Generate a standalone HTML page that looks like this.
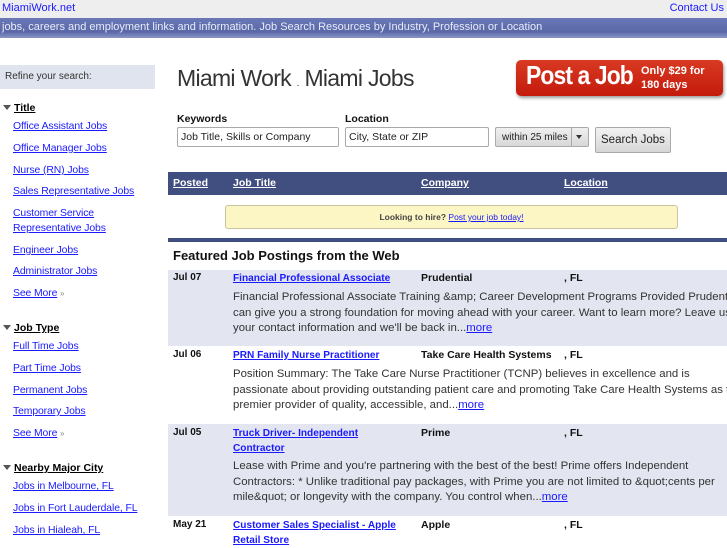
<!DOCTYPE html>
<html><head><style>
*{margin:0;padding:0;box-sizing:border-box}
body{width:727px;height:545px;overflow:hidden;background:#fff;font-family:"Liberation Sans",sans-serif;position:relative;color:#222}
.a{position:absolute;white-space:nowrap}
a{color:#1a1aff;text-decoration:underline}
.sl{font-size:10.4px;letter-spacing:-0.1px}
.sh{font-size:10.5px;font-weight:bold;color:#000}
.tri{display:inline-block;width:0;height:0;border-left:4px solid transparent;border-right:4px solid transparent;border-top:5px solid #555;margin-right:3px;vertical-align:1px}
.th a{color:#fff;font-weight:bold;font-size:10.5px}
.d{font-size:10px;font-weight:bold;color:#111}
.t{font-size:10.1px;font-weight:bold;line-height:15px}
.c{font-size:10.5px;font-weight:bold;color:#111}
.desc{font-size:11.4px;line-height:15.5px;color:#333}
.row{position:absolute;left:168px;width:559px}
.inp{position:absolute;border:1px solid #aaa;border-radius:2px;background:#fff;font-size:10.5px;padding:3px 3px;height:20px}
</style></head><body>
<div class="a" style="left:0;top:0;width:727px;height:18px;background:#eeeeee"></div>
<a class="a" style="left:2px;top:2px;font-size:11px;text-decoration:none">MiamiWork.net</a>
<a class="a" style="right:3px;top:2px;font-size:11px;text-decoration:none">Contact Us</a>
<div class="a" style="left:0;top:18px;width:727px;height:20px;background:linear-gradient(#6a78b8,#5a68a8 70%,#8a96c8)"></div>
<div class="a" style="left:2px;top:21px;font-size:11px;color:#e8ecf8">jobs, careers and employment links and information. Job Search Resources by Industry, Profession or Location</div>

<div class="a" style="left:0;top:65px;width:155px;height:24px;background:#e0e4ee"></div>
<div class="a" style="left:5px;top:71px;font-size:10px;color:#333">Refine your search:</div>

<div class="a sh" style="left:3px;top:102px"><span class="tri"></span><u>Title</u></div>
<a class="a sl" style="left:13px;top:121px">Office Assistant Jobs</a>
<a class="a sl" style="left:13px;top:143px">Office Manager Jobs</a>
<a class="a sl" style="left:13px;top:165px">Nurse (RN) Jobs</a>
<a class="a sl" style="left:13px;top:186px">Sales Representative Jobs</a>
<a class="a sl" style="left:13px;top:208px">Customer Service</a>
<a class="a sl" style="left:13px;top:223px">Representative Jobs</a>
<a class="a sl" style="left:13px;top:245px">Engineer Jobs</a>
<a class="a sl" style="left:13px;top:266px">Administrator Jobs</a>
<div class="a sl" style="left:13px;top:288px"><a>See More</a> <span style="color:#888;font-size:8px">»</span></div>

<div class="a sh" style="left:3px;top:322px"><span class="tri"></span><u>Job Type</u></div>
<a class="a sl" style="left:13px;top:341px">Full Time Jobs</a>
<a class="a sl" style="left:13px;top:363px">Part Time Jobs</a>
<a class="a sl" style="left:13px;top:385px">Permanent Jobs</a>
<a class="a sl" style="left:13px;top:406px">Temporary Jobs</a>
<div class="a sl" style="left:13px;top:428px"><a>See More</a> <span style="color:#888;font-size:8px">»</span></div>

<div class="a sh" style="left:3px;top:462px"><span class="tri"></span><u>Nearby Major City</u></div>
<a class="a sl" style="left:13px;top:481px">Jobs in Melbourne, FL</a>
<a class="a sl" style="left:13px;top:503px">Jobs in Fort Lauderdale, FL</a>
<a class="a sl" style="left:13px;top:525px">Jobs in Hialeah, FL</a>

<div class="a" style="left:177px;top:65px;font-size:23px;color:#333;letter-spacing:-0.7px">Miami Work <span style="font-size:10px">.</span> Miami Jobs</div>

<div class="a" style="left:516px;top:60px;width:207px;height:36px;background:linear-gradient(#d83a22,#c41a0c);border-radius:5px;box-shadow:1px 2px 3px #999"></div>
<div class="a" style="left:526px;top:60px;font-size:26px;font-weight:bold;color:#fff;letter-spacing:-1px;transform:scaleX(0.88);transform-origin:left">Post a Job</div>
<div class="a" style="left:641px;top:64px;font-size:11px;font-weight:bold;color:#fff;line-height:14px">Only $29 for<br>180 days</div>

<div class="a" style="left:177px;top:113px;font-size:10.5px;font-weight:bold;color:#111">Keywords</div>
<div class="a" style="left:345px;top:113px;font-size:10.5px;font-weight:bold;color:#111">Location</div>
<div class="inp" style="left:177px;top:127px;width:162px">Job Title, Skills or Company</div>
<div class="inp" style="left:345px;top:127px;width:144px">City, State or ZIP</div>
<div class="a" style="left:495px;top:127px;width:94px;height:20px;border:1px solid #aaa;border-radius:2px;background:linear-gradient(#f0f0f0,#d8d8d8);font-size:10px;padding:4px 6px">within 25 miles</div>
<div class="a" style="left:571px;top:128px;width:1px;height:18px;background:#aaa"></div>
<div class="a" style="left:576px;top:135px;border-left:3.5px solid transparent;border-right:3.5px solid transparent;border-top:4px solid #333"></div>
<div class="a" style="left:595px;top:127px;width:76px;height:26px;border:1px solid #aaa;border-radius:2px;background:linear-gradient(#f2f2f2,#d6d6d6);font-size:11.5px;padding:6px 5px;color:#222">Search Jobs</div>

<div class="a" style="left:168px;top:172px;width:559px;height:23px;background:#404e80"></div>
<div class="th"><a class="a" style="left:173px;top:177px">Posted</a><a class="a" style="left:233px;top:177px">Job Title</a><a class="a" style="left:421px;top:177px">Company</a><a class="a" style="left:564px;top:177px">Location</a></div>

<div class="a" style="left:225px;top:205px;width:453px;height:24px;background:#fcf6c4;border:1px solid #c8c4a0;border-radius:3px;font-size:8.5px;font-weight:bold;color:#444;text-align:center;padding-top:6px">Looking to hire? <a style="font-weight:normal">Post your job today!</a></div>

<div class="a" style="left:168px;top:238px;width:559px;height:4px;background:#404e80"></div>
<div class="a" style="left:173px;top:248px;font-size:13px;font-weight:bold;color:#111">Featured Job Postings from the Web</div>

<div class="row" style="top:270px;height:76px;background:#e3e6f0"></div>
<div class="a d" style="left:173px;top:272px">Jul 07</div>
<a class="a t" style="left:233px;top:271px">Financial Professional Associate</a>
<div class="a c" style="left:421px;top:272px">Prudential</div>
<div class="a c" style="left:564px;top:272px">, FL</div>
<div class="a desc" style="left:233px;top:290px">Financial Professional Associate Training &amp;amp; Career Development Programs Provided Prudential<br>can give you a strong foundation for moving ahead with your career. Want to learn more? Leave us<br>your contact information and we'll be back in...<a>more</a></div>

<div class="a d" style="left:173px;top:349px">Jul 06</div>
<a class="a t" style="left:233px;top:348px">PRN Family Nurse Practitioner</a>
<div class="a c" style="left:421px;top:349px">Take Care Health Systems</div>
<div class="a c" style="left:564px;top:349px">, FL</div>
<div class="a desc" style="left:233px;top:367px">Position Summary: The Take Care Nurse Practitioner (TCNP) believes in excellence and is<br>passionate about providing outstanding patient care and promoting Take Care Health Systems as the<br>premier provider of quality, accessible, and...<a>more</a></div>

<div class="row" style="top:424px;height:92px;background:#e3e6f0"></div>
<div class="a d" style="left:173px;top:427px">Jul 05</div>
<a class="a t" style="left:233px;top:426px">Truck Driver- Independent<br>Contractor</a>
<div class="a c" style="left:421px;top:427px">Prime</div>
<div class="a c" style="left:564px;top:427px">, FL</div>
<div class="a desc" style="left:233px;top:459px">Lease with Prime and you're partnering with the best of the best! Prime offers Independent<br>Contractors: * Unlike traditional pay packages, with Prime you are not limited to &amp;quot;cents per<br>mile&amp;quot; or longevity with the company. You control when...<a>more</a></div>

<div class="a d" style="left:173px;top:519px">May 21</div>
<a class="a t" style="left:233px;top:518px">Customer Sales Specialist - Apple<br>Retail Store</a>
<div class="a c" style="left:421px;top:519px">Apple</div>
<div class="a c" style="left:564px;top:519px">, FL</div>
</body></html>
